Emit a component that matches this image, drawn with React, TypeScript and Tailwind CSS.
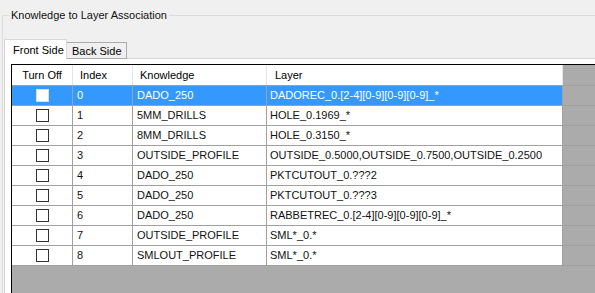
import React from 'react';

type Row = { idx: number; knowledge: string; layer: string };

const rows: Row[] = [
  { idx: 0, knowledge: 'DADO_250', layer: 'DADOREC_0.[2-4][0-9][0-9][0-9]_*' },
  { idx: 1, knowledge: '5MM_DRILLS', layer: 'HOLE_0.1969_*' },
  { idx: 2, knowledge: '8MM_DRILLS', layer: 'HOLE_0.3150_*' },
  { idx: 3, knowledge: 'OUTSIDE_PROFILE', layer: 'OUTSIDE_0.5000,OUTSIDE_0.7500,OUTSIDE_0.2500' },
  { idx: 4, knowledge: 'DADO_250', layer: 'PKTCUTOUT_0.???2' },
  { idx: 5, knowledge: 'DADO_250', layer: 'PKTCUTOUT_0.???3' },
  { idx: 6, knowledge: 'DADO_250', layer: 'RABBETREC_0.[2-4][0-9][0-9][0-9]_*' },
  { idx: 7, knowledge: 'OUTSIDE_PROFILE', layer: 'SML*_0.*' },
  { idx: 8, knowledge: 'SMLOUT_PROFILE', layer: 'SML*_0.*' },
];

const Check: React.FC<{ selected?: boolean }> = ({ selected }) => (
  <span
    className={`block w-[13px] h-[13px] bg-white border ${selected ? 'border-[#dcdcdc]' : 'border-[#333]'}`}
  />
);

const GridRow: React.FC<{ row: Row; selected: boolean }> = ({ row, selected }) => {
  const cell = `h-full flex items-center border-r border-[#a0a0a0] ${selected ? 'bg-[#3399ff] text-white' : 'bg-white text-[#111]'}`;
  return (
    <div className="flex h-[20px] border-b border-[#a0a0a0]">
      <div className={`${cell} w-[61px] justify-center`}>
        <Check selected={selected} />
      </div>
      <div className={`${cell} w-[60px] pl-[4px]`}>{row.idx}</div>
      <div className={`${cell} w-[134px] pl-[4px]`}>{row.knowledge}</div>
      <div className={`${cell} w-[296px] pl-[3px]`}>{row.layer}</div>
    </div>
  );
};

export default function App() {
  return (
    <div className="w-[595px] h-[293px] overflow-hidden bg-[#f0f0f0] font-['Liberation_Sans',Arial,sans-serif] text-[11px] leading-none text-black">
      <div className="relative mt-[15px] ml-[2px] w-[700px] h-[400px] border-t border-l border-[#dcdcdc]">
        <span className="absolute left-[6px] -top-[6px] px-[2px] bg-[#f0f0f0] text-[#111]">
          Knowledge to Layer Association
        </span>

        <div className="pt-[23px] pl-[1px]">
          <div className="flex items-end h-[20px] relative z-10 -mb-px">
            <div className="h-[20px] w-[63px] pl-[8px] pt-[5px] bg-white border border-b-0 border-[#d9d9d9]">
              Front Side
            </div>
            <div className="h-[17px] w-[60px] pl-[5px] pt-[3px] bg-[#f0f0f0] border border-[#acacac] border-l-0">
              Back Side
            </div>
          </div>

          <div className="bg-white border border-[#d9d9d9] pt-[5px] pl-[6px] h-[400px]">
            <div className="border-t border-l border-black bg-[#ababab] h-[400px]">
              <div className="flex h-[21px] border-b border-[#a0a0a0]">
                <div className="w-[61px] h-full flex items-center justify-center pt-px bg-white border-r border-[#e5e5e5]">
                  Turn Off
                </div>
                <div className="w-[60px] h-full flex items-center pl-[7px] pt-px bg-white border-r border-[#e5e5e5]">
                  Index
                </div>
                <div className="w-[134px] h-full flex items-center pl-[7px] pt-px bg-white border-r border-[#e5e5e5]">
                  Knowledge
                </div>
                <div className="w-[296px] h-full flex items-center pl-[8px] pt-px bg-white border-r border-[#e5e5e5]">
                  Layer
                </div>
              </div>
              {rows.map((r) => (
                <GridRow key={r.idx} row={r} selected={r.idx === 0} />
              ))}
            </div>
          </div>
        </div>
      </div>
    </div>
  );
}
